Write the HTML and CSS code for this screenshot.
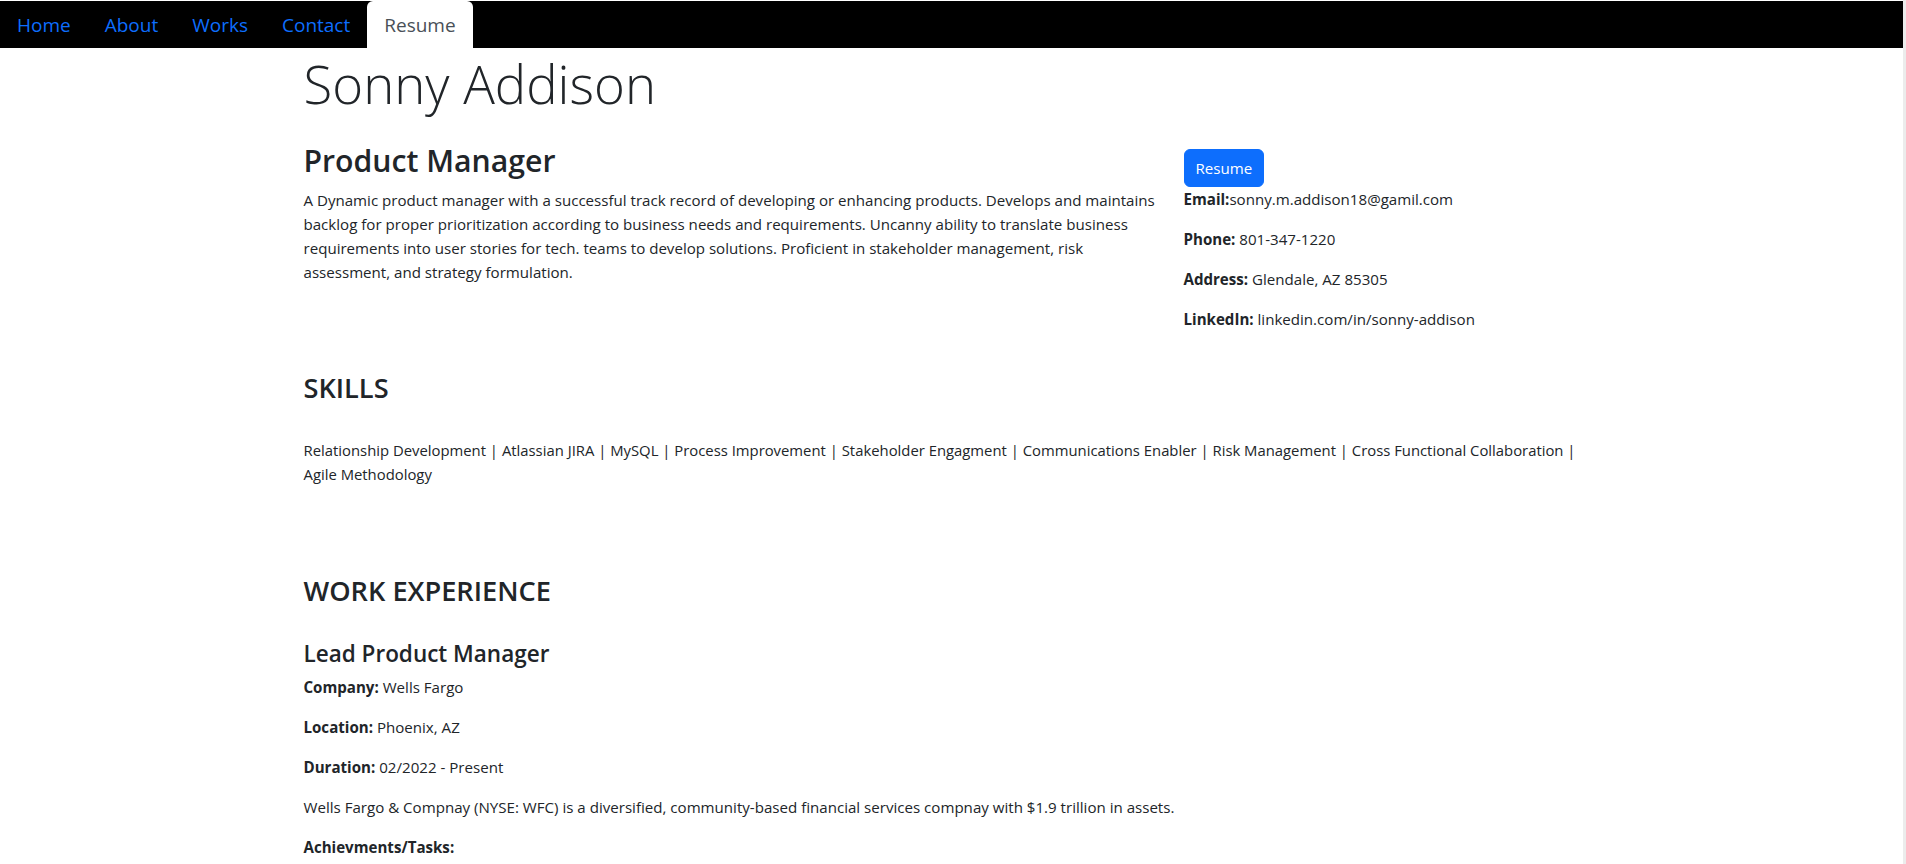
FILE: index.html
```html
<!DOCTYPE html>
<html lang="en">
<head>
<meta charset="utf-8">
<title>Resume - Sonny Addison</title>
<link rel="stylesheet" href="styles.css">
</head>
<body>
<header class="topbar">
  <nav class="tabs">
    <a class="tab" href="#">Home</a>
    <a class="tab" href="#">About</a>
    <a class="tab" href="#">Works</a>
    <a class="tab" href="#">Contact</a>
    <a class="tab active" href="#">Resume</a>
  </nav>
</header>
<main class="container">
  <h1 class="name">Sonny Addison</h1>
  <section class="intro">
    <div class="summary">
      <h2 class="title">Product Manager</h2>
      <p>A Dynamic product manager with a successful track record of developing or enhancing products. Develops and maintains backlog for proper prioritization according to business needs and requirements. Uncanny ability to translate business requirements into user stories for tech. teams to develop solutions. Proficient in stakeholder management, risk assessment, and strategy formulation.</p>
    </div>
    <aside class="contact">
      <button class="btn" type="button">Resume</button>
      <p><strong>Email:</strong>sonny.m.addison18@gamil.com</p>
      <p><strong>Phone:</strong> 801-347-1220</p>
      <p><strong>Address:</strong> Glendale, AZ 85305</p>
      <p><strong>LinkedIn:</strong> linkedin.com/in/sonny-addison</p>
    </aside>
  </section>
  <section class="skills">
    <h3 class="section-title">SKILLS</h3>
    <p class="skills-list">Relationship Development | Atlassian JIRA | MySQL | Process Improvement | Stakeholder Engagment | Communications Enabler | Risk Management | Cross Functional Collaboration | Agile Methodology</p>
  </section>
  <section class="work">
    <h3 class="section-title">WORK EXPERIENCE</h3>
    <article class="job">
      <h4 class="job-title">Lead Product Manager</h4>
      <p><strong>Company:</strong> Wells Fargo</p>
      <p><strong>Location:</strong> Phoenix, AZ</p>
      <p><strong>Duration:</strong> 02/2022 - Present</p>
      <p>Wells Fargo &amp; Compnay (NYSE: WFC) is a diversified, community-based financial services compnay with $1.9 trillion in assets.</p>
      <p><strong>Achievments/Tasks:</strong></p>
    </article>
  </section>
</main>
<div class="scrollbar"></div>
</body>
</html>
```

FILE: styles.css
```css
* {
  box-sizing: border-box;
}

body {
  margin: 0;
  padding-right: 3px;
  font-family: "Open Sans", "Noto Sans", sans-serif;
  font-size: 15.1px;
  line-height: 24px;
  color: #212529;
  background: #fff;
}

strong {
  font-weight: 700;
}

/* Top navigation */
.topbar {
  margin-top: 1px;
  height: 47px;
  background: #000;
}

.tabs {
  display: flex;
  height: 100%;
}

.tab {
  display: flex;
  align-items: center;
  padding: 0 17px;
  font-size: 19px;
  line-height: 28px;
  color: #0d6efd;
  text-decoration: none;
  border-radius: 6px 6px 0 0;
}

.tab.active {
  background: #fff;
  color: #495057;
}

/* Main content */
.container {
  width: 1296px;
  margin: 0 auto;
  display: flex;
  flex-direction: column;
}

.name {
  margin: 2px 0 0;
  font-size: 52.7px;
  font-weight: 300;
  line-height: 67px;
}

.intro {
  margin-top: 25px;
  display: grid;
  grid-template-columns: 868px 1fr;
  column-gap: 12px;
}

.summary {
  display: flex;
  flex-direction: column;
}

.title {
  margin: 0 0 8px;
  font-size: 30.2px;
  font-weight: 600;
  line-height: 38px;
}

.summary p {
  margin: 0;
}

.contact {
  display: flex;
  flex-direction: column;
  align-items: flex-start;
  padding-top: 7px;
}

.btn {
  font-family: inherit;
  font-size: 15.1px;
  line-height: 24px;
  padding: 6px 11px;
  color: #fff;
  background: #0d6efd;
  border: 1px solid #0d6efd;
  border-radius: 6px;
}

.contact p {
  margin: 0 0 16px;
}

.section-title {
  margin: 0;
  font-size: 27.2px;
  font-weight: 600;
  line-height: 32px;
}

.skills {
  margin-top: 25px;
  display: flex;
  flex-direction: column;
}

.skills-list {
  margin: 34px 0 0;
  font-size: 14.85px;
}

.work {
  margin-top: 89px;
  display: flex;
  flex-direction: column;
}

.job {
  margin-top: 33px;
  display: flex;
  flex-direction: column;
  gap: 16px;
}

.job-title {
  margin: 0 0 -8px;
  font-size: 22.5px;
  font-weight: 600;
  line-height: 27px;
}

.job p {
  margin: 0;
}

.scrollbar {
  position: fixed;
  top: 0;
  right: 0;
  width: 3px;
  height: 100%;
  background: #ececec;
}
```
